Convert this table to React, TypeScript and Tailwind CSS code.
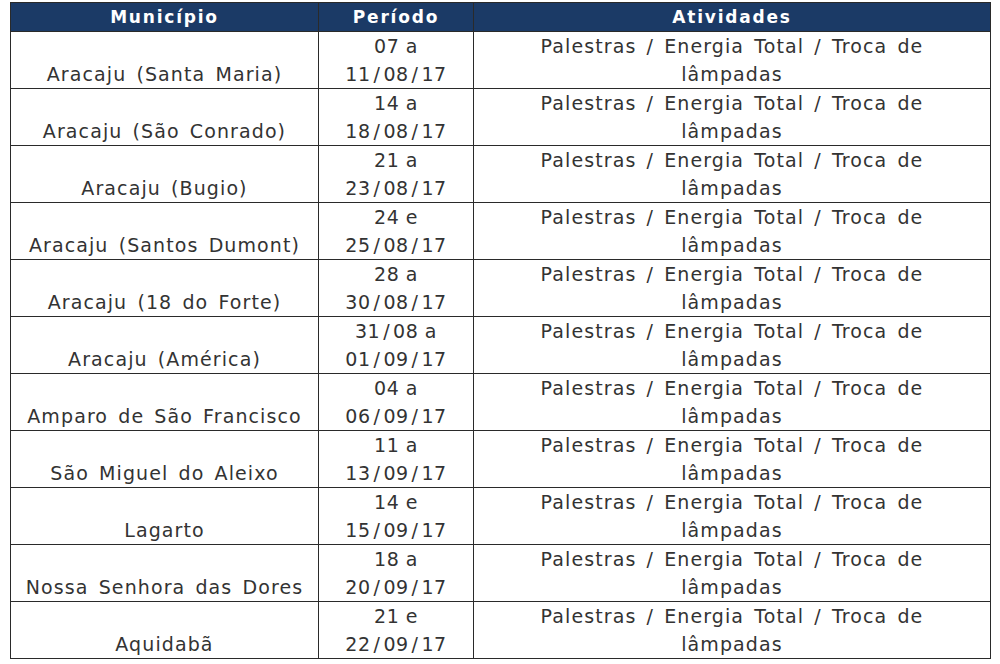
const rows = [
  { city: "Aracaju (Santa Maria)", from: "07 a", to: "11/08/17" },
  { city: "Aracaju (São Conrado)", from: "14 a", to: "18/08/17" },
  { city: "Aracaju (Bugio)", from: "21 a", to: "23/08/17" },
  { city: "Aracaju (Santos Dumont)", from: "24 e", to: "25/08/17" },
  { city: "Aracaju (18 do Forte)", from: "28 a", to: "30/08/17" },
  { city: "Aracaju (América)", from: "31/08 a", to: "01/09/17" },
  { city: "Amparo de São Francisco", from: "04 a", to: "06/09/17" },
  { city: "São Miguel do Aleixo", from: "11 a", to: "13/09/17" },
  { city: "Lagarto", from: "14 e", to: "15/09/17" },
  { city: "Nossa Senhora das Dores", from: "18 a", to: "20/09/17" },
  { city: "Aquidabã", from: "21 e", to: "22/09/17" },
];

// the dates in the source have airy slashes
function DateText({ text }: { text: string }) {
  const parts = text.split("/");
  return (
    <>
      {parts.map((p, i) => (
        <span key={i}>
          {i > 0 && <span className="mx-[3px]">/</span>}
          {p}
        </span>
      ))}
    </>
  );
}

export default function App() {
  return (
    <div className="w-[1000px] h-[664px] bg-white pt-[2px] pl-[10px] font-['DejaVu_Sans',sans-serif]">
      <table className="w-[980px] border-collapse table-fixed border border-[#2a2a2a]">
        <colgroup>
          <col className="w-[308px]" />
          <col className="w-[155px]" />
          <col className="w-[517px]" />
        </colgroup>
        <thead>
          <tr className="h-[29px] bg-[#1b3a66] text-white text-[17px] font-bold leading-[28px] tracking-[1.8px]">
            <th className="border border-[#2a2a2a]">Município</th>
            <th className="border border-[#2a2a2a]">Período</th>
            <th className="border border-[#2a2a2a]">Atividades</th>
          </tr>
        </thead>
        <tbody className="text-[#333333] text-[19px] leading-[28px] tracking-[1.1px] [word-spacing:3px]">
          {rows.map((r) => (
            <tr key={r.city} className="h-[57px]">
              <td className="border border-[#2a2a2a] text-center align-bottom p-0">{r.city}</td>
              <td className="border border-[#2a2a2a] text-center align-top p-0 tracking-[0.5px] [word-spacing:0px]">
                <div><DateText text={r.from} /></div>
                <div><DateText text={r.to} /></div>
              </td>
              <td className="border border-[#2a2a2a] text-center align-top p-0">
                <div>Palestras / Energia Total / Troca de</div>
                <div>lâmpadas</div>
              </td>
            </tr>
          ))}
        </tbody>
      </table>
    </div>
  );
}
